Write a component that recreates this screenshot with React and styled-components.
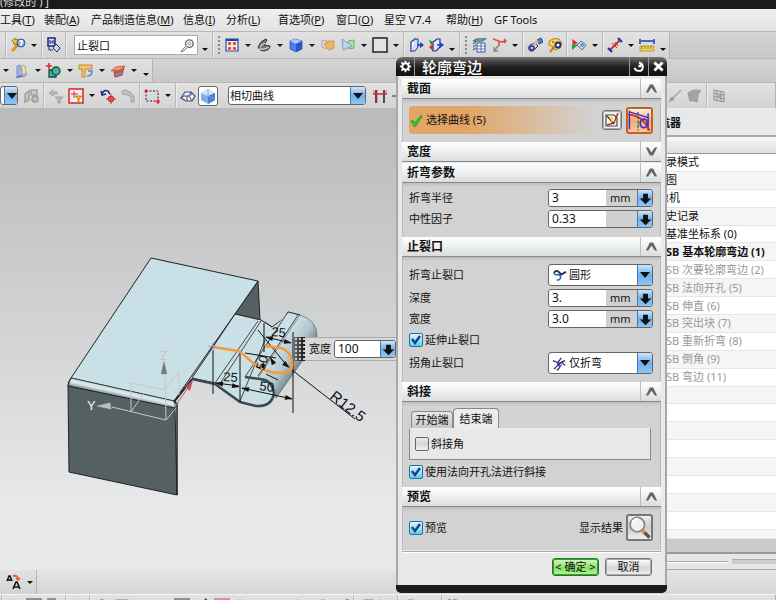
import React from "react";
import styled, { createGlobalStyle, css } from "styled-components";

const FONT = '"Noto Sans", "Noto Sans CJK SC", sans-serif';

const GlobalStyle = createGlobalStyle`
  * { box-sizing: border-box; }
  body { margin: 0; font: 11px/16px ${FONT}; color: #111; overflow: hidden; }
  button, input, select { font: inherit; color: inherit; margin: 0; }
`;

const Page = styled.div`
  position: relative;
  display: flex;
  flex-direction: column;
  height: 100vh;
  overflow: hidden;
  background: #dcdcdc;
`;
const TitleBar = styled.header`
  height: 9px;
  flex: none;
  display: flex;
  align-items: flex-end;
  overflow: hidden;
  background: #1b1b1b;
  color: #ddd;
  line-height: 14px;
`;
const MenuBar = styled.nav`
  height: 22px;
  flex: none;
  display: flex;
  align-items: center;
  background: linear-gradient(#f0f0f0, #e2e2e2);
  white-space: nowrap;
  overflow: hidden;
`;
const MenuItem = styled.button`
  flex: none;
  width: ${(p) => p.$w}px;
  padding: 0;
  border: 0;
  background: none;
  text-align: left;
  white-space: nowrap;
  line-height: 20px;
`;

const Strip = styled.div`
  flex: none;
  display: flex;
  background: linear-gradient(#d4d4d4, #c8c8c8);
  border-top: 1px solid #b8b8b8;
`;
const Bar = styled.div`
  display: flex;
  align-items: center;
  height: ${(p) => p.$h}px;
  flex: ${(p) => (p.$fill ? "1" : "none")};
  overflow: hidden;
  background: linear-gradient(#e2e2e2, #d3d3d3);
  border-right: 1px solid #b4b4b4;
  padding-left: ${(p) => p.$pad || 0}px;
`;
const Tool = styled.button`
  flex: none;
  display: flex;
  align-items: center;
  justify-content: center;
  width: 20px;
  height: 20px;
  padding: 0;
  border: ${(p) => (p.$on ? "1px solid #666" : "0")};
  border-radius: 3px;
  background: ${(p) => (p.$on ? "#fff" : "none")};
  opacity: ${(p) => (p.$dim ? 0.55 : 1)};
`;
const Caret = styled.button`
  flex: none;
  width: 12px;
  height: 18px;
  padding: ${(p) => (p.$low ? "8px 0 0" : "0")};
  border: 0;
  background: none;
  display: flex;
  align-items: center;
  justify-content: center;
  &::after {
    content: "";
    border: 3px solid transparent;
    border-top-color: #111;
    border-bottom: 0;
  }
`;
const Sep = styled.span`
  flex: none;
  width: 4px;
  align-self: stretch;
  background: linear-gradient(90deg, transparent 1px, #b8b8b8 1px 2px, #eee 2px 3px, transparent 3px);
`;
const Grip = styled.span`
  flex: none;
  width: 7px;
  height: 18px;
  background: repeating-linear-gradient(#888 0 2px, transparent 2px 4px) center / 2px 100% no-repeat;
`;
const Grow = styled.span`
  flex: 1;
`;
const NavGap = styled.span`
  flex: none;
  width: 46px;
`;
const SearchBox = styled.label`
  flex: none;
  display: flex;
  align-items: center;
  width: 124px;
  height: 20px;
  margin: 0 1px 0 6px;
  background: #fff;
  border: 1px solid #aaa;
  padding-right: 2px;
`;
const SearchInput = styled.input`
  flex: 1;
  min-width: 0;
  height: 18px;
  padding: 0 2px;
  border: 0;
  outline: 0;
  background: none;
`;

const blue = "linear-gradient(#cfe6fb, #6fb0ee 50%, #8cc6f6)";
const SelectWrap = styled.label`
  display: grid;
  flex: none;
  align-items: stretch;
  width: ${(p) => p.$w}px;
  height: ${(p) => p.$h}px;
  margin: 0 ${(p) => p.$mr || 0}px 0 ${(p) => p.$ml || 0}px;
  border: 1px solid #666;
  border-radius: 3px;
  background: #fff;
  overflow: hidden;
  > * { grid-area: 1 / 1; }
  > svg { align-self: center; margin-left: 3px; pointer-events: none; }
`;
const SelectCtl = styled.select`
  appearance: none;
  border: 0;
  outline: 0;
  width: 100%;
  background: none;
  padding: 0 18px 0 ${(p) => p.$pl}px;
`;
const DropMark = styled.span`
  justify-self: end;
  width: 15px;
  pointer-events: none;
  display: flex;
  align-items: center;
  justify-content: center;
  background: ${blue};
  border-left: 1px solid #4a78a8;
  &::after {
    content: "";
    border: 5px solid transparent;
    border-top: 6px solid #111;
    border-bottom: 0;
  }
`;

/* Work area */
const Work = styled.main`
  flex: 1;
  min-height: 0;
  display: flex;
`;
const Viewport = styled.section`
  position: relative;
  flex: 1;
  min-width: 0;
  display: flex;
  flex-direction: column;
  overflow: hidden;
  background: linear-gradient(#b9babc, #d3d4d6 50%, #e6e8ea 85%);
`;
const Scene = styled.svg`
  display: block;
  flex: none;
`;
const WidthPopup = styled.form`
  position: absolute;
  left: 293px;
  top: 229px;
  width: 104px;
  height: 24px;
  display: flex;
  align-items: center;
  background: #d8d8d8;
  border: 1px solid #aaa;
  border-left: 0;
`;
const PopupGrip = styled.span`
  width: 12px;
  height: 24px;
  margin-right: 4px;
  background:
    radial-gradient(circle, #ccc 1px, transparent 1px) 1px 4px / 4px 4px,
    linear-gradient(90deg, #777, #111);
`;
const PopupLabel = styled.label`
  flex: none;
  width: 25px;
`;

const Navigator = styled.aside`
  width: 136px;
  flex: none;
  display: flex;
  flex-direction: column;
  background: #e6e6e6;
`;
const NavTitle = styled.h2`
  margin: 0;
  height: 29px;
  flex: none;
  padding-left: 19px;
  font-size: 11px;
  line-height: 29px;
  background: #e8e8e8;
  border-bottom: 2px solid #aaa;
`;
const NavHead = styled.div`
  height: 17px;
  flex: none;
  background: linear-gradient(#f6f7f7, #dde0e0);
  border-bottom: 1px solid #999;
`;
const NavList = styled.ul`
  flex: 1;
  min-height: 0;
  display: flex;
  flex-direction: column;
  margin: 0;
  padding: 0;
  list-style: none;
`;
const NavRow = styled.li`
  flex: ${(p) => (p.$half ? 1 : 2)};
  min-height: 0;
  display: flex;
  align-items: center;
  padding-left: ${(p) => p.$pl}px;
  white-space: nowrap;
  background: ${(p) => (p.$alt ? "#f5f5f6" : "#fff")};
  border-bottom: 1px solid #e6e6e6;
  color: ${(p) => (p.$tone === "dim" ? "#999" : "#111")};
  font-weight: ${(p) => (p.$tone === "bold" ? 700 : 400)};
`;
const NavScroll = styled.div`
  height: 15px;
  flex: none;
  background: #cbcbcb;
  border-bottom: 2px solid #999;
`;
const NavFoot = styled.div`
  height: 16px;
  flex: none;
  display: flex;
  align-items: center;
  border-bottom: 1px solid #aaa;
`;
const FootLine = styled.span`
  flex: ${(p) => (p.$thick ? "1" : "none")};
  width: ${(p) => (p.$thick ? "auto" : "88px")};
  margin-right: ${(p) => (p.$thick ? 0 : 4)}px;
  height: ${(p) => (p.$thick ? 5 : 2)}px;
  background: ${(p) => (p.$thick ? "#cdcdcd" : "#fff")};
  border-top: 1px solid #aaa;
`;

const StatusBar = styled.div`
  height: 24px;
  flex: none;
  display: flex;
  background: linear-gradient(#e4e4e4, #d6d6d6);
`;
const ClippedBar = styled.div`
  height: 6px;
  flex: none;
  overflow: hidden;
  border-top: 1px solid #f4f4f4;
  background: #d4d4d4;
`;

/* Dialog */
const Dialog = styled.section`
  position: absolute;
  left: 396px;
  top: 57px;
  width: 271px;
  border-radius: 6px 6px 5px 5px;
  background: #e9e9e9;
  overflow: hidden;
  border-bottom: 8px solid #1c1c1c;
`;
const DialogBar = styled.header`
  height: 19px;
  display: flex;
  align-items: center;
  background: linear-gradient(#777, #444 25%, #1d1d1d 55%, #111);
`;
const DialogTitle = styled.h1`
  flex: 1;
  margin: 0;
  padding-left: 7px;
  font-size: 15px;
  font-weight: 500;
  line-height: 16px;
  color: #fff;
`;
const BarButton = styled.button`
  width: 19px;
  height: 19px;
  padding: 0;
  border: 0;
  background: none;
  display: flex;
  align-items: center;
  justify-content: center;
  border-left: ${(p) => (p.$edge === "l" ? "1px solid #999" : "0")};
  border-right: ${(p) => (p.$edge === "r" ? "1px solid #999" : "0")};
`;
const DialogBody = styled.div`
  padding: 3px 4px 0 4px;
  border: solid #a8a8a8;
  border-width: 0 2px;
`;
const SectionHead = styled.h2`
  margin: 0;
  height: 20px;
  display: flex;
  align-items: stretch;
  font-size: 12px;
  font-weight: 700;
  line-height: 20px;
  padding-left: 5px;
  background: linear-gradient(#fff, #eef0f0 50%, #dadddd);
  border-bottom: 1px solid #888;
  margin-bottom: ${(p) => (p.$closed ? 1 : 0)}px;
`;
const SectionName = styled.span`
  flex: 1;
`;
const Fold = styled.button`
  width: 21px;
  padding: 0;
  border: 0;
  border-left: 1px solid #bbb;
  background: none;
  display: flex;
  align-items: center;
  justify-content: center;
`;
const SectionBody = styled.div`
  display: flex;
  flex-direction: column;
  gap: 3px;
  padding: ${(p) => p.$pt}px 7px ${(p) => p.$pb}px 6px;
  background: linear-gradient(#bdbdbd, #d2d2d2 4px);
  border: solid #bbb;
  border-width: 0 1px;
`;
const Row = styled.div`
  display: flex;
  align-items: center;
  justify-content: space-between;
  min-height: 18px;
  gap: ${(p) => p.$gap || 0}px;
`;
const PickBar = styled.div`
  flex: 1;
  height: 28px;
  display: flex;
  align-items: center;
  gap: 3px;
  padding-left: 1px;
  border-radius: 4px 0 0 4px;
  background: linear-gradient(90deg, #e2a565 30%, #d2d2d2 98%);
`;
const PickButton = styled.button`
  width: ${(p) => (p.$on ? 27 : 20)}px;
  height: ${(p) => (p.$on ? 27 : 20)}px;
  padding: 0;
  display: flex;
  align-items: center;
  justify-content: center;
  border-radius: 3px;
  ${(p) =>
    p.$on
      ? css`
          border: 2px solid #c8601c;
          background: linear-gradient(#fff4ea, #f6a878 50%, #f9c7a2);
        `
      : css`
          border: 1px solid #777;
          box-shadow: inset 0 0 0 1px #aaa;
          background: #f0f0f0;
        `}
`;
const Field = styled.span`
  display: flex;
  flex: ${(p) => (p.$fill ? "1" : "none")};
  min-width: 0;
  width: 105px;
  height: 18px;
  border: 1px solid #666;
  border-radius: 3px;
  background: #d0d0d0;
  overflow: hidden;
`;
const FieldInput = styled.input`
  width: 57px;
  flex: ${(p) => (p.$fill ? "1" : "none")};
  min-width: 0;
  padding: 0 3px;
  border: 0;
  outline: 0;
  background: #fff;
  font-size: 12px;
  line-height: 16px;
`;
const Unit = styled.span`
  flex: 1;
  padding-left: 4px;
`;
const Step = styled.button`
  flex: none;
  width: 15px;
  padding: 0;
  border: 0;
  border-left: 1px solid #4a78a8;
  background: ${blue};
  display: flex;
  align-items: center;
  justify-content: center;
`;
const CheckLabel = styled.label`
  display: flex;
  align-items: center;
  gap: 2px;
`;
const CheckBox = styled.input`
  appearance: none;
  width: 14px;
  height: 14px;
  margin: 0;
  border: 1px solid #666;
  border-radius: 2px;
  background: linear-gradient(#eee, #d4d4d4 50%, #f4f4f4);
  &:checked {
    border-color: #1d6ea5;
    background:
      url("data:image/svg+xml,%3Csvg xmlns='http://www.w3.org/2000/svg' viewBox='0 0 12 12'%3E%3Cpath d='M2 5l3 4 5-7' fill='none' stroke='%23133f8c' stroke-width='2.4'/%3E%3C/svg%3E"),
      linear-gradient(#e8f6fc, #58d0ee);
  }
`;
const Tabs = styled.div`
  display: flex;
  align-items: flex-end;
  height: 20px;
  padding-left: 2px;
`;
const Tab = styled.button`
  height: ${(p) => (p.$on ? 21 : 17)}px;
  width: ${(p) => (p.$on ? 46 : 42)}px;
  padding: 0;
  white-space: nowrap;
  border: 1px solid #888;
  border-bottom: 0;
  border-radius: 4px 4px 0 0;
  background: ${(p) => (p.$on ? "#ececec" : "linear-gradient(#e8e8e8, #c8c8c8)")};
  align-self: ${(p) => (p.$on ? "flex-start" : "flex-end")};
`;
const TabPanel = styled.div`
  display: flex;
  height: 32px;
  margin-right: 2px;
  padding-left: 5px;
  background: #e8e8e8;
  border: 1px solid #888;
  border-top-color: #eee;
`;
const TabGroup = styled.div`
  display: flex;
  flex-direction: column;
`;
const ResultLabel = styled.label`
  display: flex;
  align-items: center;
  gap: 3px;
`;
const ResultButton = styled.button`
  width: 27px;
  height: 27px;
  padding: 0;
  border: 2px solid #777;
  border-radius: 3px;
  background: linear-gradient(#eee, #ccc 50%, #eee);
`;
const Footer = styled.footer`
  display: flex;
  justify-content: flex-end;
  gap: 6px;
  height: 33px;
  margin-top: 2px;
  padding: 5px 9px 0 0;
  border-top: 1px solid #fff;
  box-shadow: 0 -1px #aaa;
`;
const ActionButton = styled.button`
  width: 47px;
  height: 18px;
  padding: 0;
  line-height: 14px;
  white-space: nowrap;
  border-radius: 3px;
  border: 1px solid ${(p) => (p.$ok ? "#1f7a22" : "#777")};
  box-shadow: inset 0 0 0 1px ${(p) => (p.$ok ? "#3f9a3a" : "#aaa")};
  background: ${(p) => (p.$ok ? "linear-gradient(#d8f8c8, #86e264 55%, #b4f696)" : "linear-gradient(#fff, #d6d6d6 55%, #f2f2f2)")};
`;

/* Icons, drawn on a 16px grid */
const art = {
  wrenchHelp: <><path d="M2 14l6-6" stroke="#d99a1c" strokeWidth="3" /><path d="M2 4q3-4 6-1l1 4-4 1-2-3" fill="#f0c040" stroke="#8a6510" /><circle cx="11" cy="6" r="4" fill="#88a9dc" stroke="#35578f" /><path d="M9.500 5q2-3 3 0l-1.500 2v2" fill="none" stroke="#fff" strokeWidth="1.500" /></>,
  finder: <><path d="M2 1h7v8H2z" fill="#dfe2ff" stroke="#22227d" strokeWidth="1.500" /><path d="M4 3v4M7 3v4M4 5h3" stroke="#22227d" /><path d="M10 7l4 4-3 4-4-4z" fill="#cfd9f8" stroke="#22227d" /><path d="M3 10v3h4" fill="none" stroke="#22227d" /></>,
  search: <><circle cx="10" cy="6" r="4" fill="none" stroke="#666" strokeWidth="1.500" /><circle cx="10" cy="6" r="1.500" fill="none" stroke="#888" /><path d="M7 8l-6 6 1 1 6-5" fill="#fff" stroke="#666" /></>,
  fit: <><path d="M2 2h12v12H2z" fill="#fff" stroke="#1c49a8" strokeWidth="1.200" /><path d="M2 3h12" stroke="#1c49a8" strokeWidth="2" /><path d="M4 5h3v3H4zM9 5h3v3H9zM4 10h3v3H4zM9 10h3v3H9z" fill="#e63a22" stroke="#f29a80" strokeWidth=".5" /></>,
  orient: <><path d="M2 10q3-7 8-8l1 1-3 5 6 1q0 4-6 5-5 0-6-4z" fill="#777" stroke="#333" /><path d="M4 10q2-3 5-4M3 12q5 1 10-2" stroke="#ccc" strokeWidth="1.300" /></>,
  cube: <><path d="M2 4l5-2 7 2v8l-6 3-6-3z" fill="#4b7df0" stroke="#29489f" strokeWidth=".7" /><path d="M2 4l5-2 7 2-6 3z" fill="#a9caff" /><path d="M8 7l6-3v8l-6 3z" fill="#2b55cb" /></>,
  layerOrange: <><path d="M2 3l5 1v8l-5-2z" fill="#ddd" stroke="#aaa" /><path d="M4 7l4-3h6v7l-5 2z" fill="#f0b260" stroke="#d09a60" /></>,
  layerGreen: <><path d="M8 4l6-1v8l-5 1z" fill="#a9e2a0" stroke="#7aa878" /><path d="M2 2l10 7-9 4z" fill="#b4d6f0" stroke="#7ea2c0" /></>,
  square: <path d="M1 1h14v14H1z" fill="#e4e4e4" stroke="#222" strokeWidth="1.500" />,
  planeArrow: <><path d="M3 5l4-3v9l-4 3z" fill="#fff" stroke="#22337d" strokeWidth="1.200" /><path d="M7 2h3v8l-3 4H3" fill="#cfe0ff" stroke="#22337d" /><path d="M9 8h4" stroke="#1741d0" strokeWidth="1.500" /><path d="M12 5l4 3-4 3z" fill="#1741d0" /></>,
  planeSwap: <><path d="M5 5l4-3h3v8l-4 4H5z" fill="#dce6ff" stroke="#22337d" strokeWidth="1.200" /><path d="M1 3l5 2-3 3z" fill="#19a035" /><path d="M1 10l4-3v7z" fill="#d7262c" /><path d="M9 8h4" stroke="#1741d0" strokeWidth="1.500" /><path d="M12 5l4 3-4 3z" fill="#1741d0" /></>,
  layers: <><path d="M2 4l4-2h8l-3 2zM2 7l3-2M2 10l3-2M2 13l3-2" fill="#fff" stroke="#457a73" strokeWidth="1.300" /><path d="M6 6h8v9H6z" fill="#fff" stroke="#3453b5" /><path d="M10 6v9M6 9h8M6 12h8" stroke="#3453b5" strokeWidth=".8" /></>,
  axes: <><path d="M2 2l6 2v5M8 5l7-1M13 2l2 2-2 2" fill="none" stroke="#e14a3a" strokeWidth="1.500" /><path d="M8 8l-5 6M3 10v4h4" fill="none" stroke="#888" strokeWidth="1.500" /></>,
  erase: <><path d="M3 8l5-2 3 3-5 5H3l-2-3z" fill="#cbd2f0" stroke="#25347f" /><circle cx="5" cy="11" r="2" fill="none" stroke="#25347f" strokeWidth="1.500" /><path d="M10 3l4-2 2 4-4 2z" fill="#4a7ce0" stroke="#24478d" /><path d="M7 7l4-3" stroke="#f1b36a" strokeWidth="3" /></>,
  palette: <><path d="M2 4q5-4 10-2l3 4-2 5-5 2-2-3-4-2z" fill="#f3d258" stroke="#b2861c" /><circle cx="11" cy="8" r="2.500" fill="#e8ecff" stroke="#1c2f80" strokeWidth="1.800" /><path d="M3 15l5-6" stroke="#c47a1a" strokeWidth="2" /><circle cx="6" cy="5" r="1" fill="#e43" /></>,
  play: <><path d="M1 2l6 4-5 2z" fill="#e22" /><path d="M1 7l6 1-6 5z" fill="#17a23a" /><path d="M6 8l4-4 5 4-4 5z" fill="#c9dcf5" stroke="#53729c" /><circle cx="11" cy="8" r="2" fill="#6d96cf" /></>,
  measure: <><path d="M3 13L13 3" stroke="#d42a2a" strokeWidth="2" /><path d="M1 11l4 4M11 1l4 4" stroke="#1c34a8" strokeWidth="2" /><path d="M5 6l5 5M8 5l3 4" stroke="#d42a2a" /></>,
  ruler: <><path d="M1 2v5M15 2v5M2 4h12" stroke="#1c34c8" strokeWidth="1.500" /><path d="M1 9h14v5H1z" fill="#f4cf58" stroke="#c09838" /><path d="M3 9v3M6 9v3M9 9v3M12 9v3" stroke="#907020" strokeWidth=".8" /></>,
  sketch: <><path d="M3 3l3-1 2 7 5 2-3 3-7-2z" fill="#9db3ea" stroke="#8289c4" /><path d="M8 2l3 1 1 8H8z" fill="#f0e47c" stroke="#aaa" /><path d="M2 14h4l2-2" stroke="#5272b8" strokeWidth="1.500" /></>,
  shape: <><path d="M3 7h7v7H3z" fill="#43b59a" stroke="#124d44" strokeWidth="1.300" /><circle cx="10" cy="8" r="4" fill="#43b59a" stroke="#124d44" strokeWidth="1.300" /><path d="M3 0v6M0 3h6" stroke="#e2262a" strokeWidth="1.500" /></>,
  bracket: <><path d="M1 2h13v4H7v8H4V6H1z" fill="#f5c574" stroke="#c98730" /><path d="M10 8h4q0 5-5 5" fill="none" stroke="#5b87cf" strokeWidth="1.500" /></>,
  flange: <><path d="M4 8l10-4-2 8-7 2z" fill="#6e8fd6" stroke="#b23a20" /><path d="M1 8l5-4 9-1-5 4z" fill="#f4a15e" stroke="#d45a30" /><path d="M4 10l8-2" stroke="#e2482c" strokeWidth="2" /></>,
  grayBox: <><path d="M1 6l4-3v9l-4 2zM7 2h6v5H7z" fill="#bbb" stroke="#777" strokeWidth="1.500" /><circle cx="11" cy="11" r="3" fill="#aaa" stroke="#666" strokeWidth="1.500" /></>,
  grayFunnel: <><path d="M1 5l4-3v2h4v2H5v2zM7 9h8l-3 3v3h-2v-3z" fill="#a2a29a" stroke="#777" /></>,
  redFilter: <><path d="M1 1h14v14H1z" fill="#f7efef" stroke="#d3262b" strokeWidth="1.500" /><path d="M6 3v7M3 6h7" stroke="#d3262b" /><path d="M7 8h7l-3 3v3h-1v-3z" fill="#f0b020" stroke="#a87412" strokeWidth=".7" /></>,
  rotatePoint: <><path d="M2 6q2-5 6-3l2 3M1 3l1 4 4-1" fill="none" stroke="#1c2d80" strokeWidth="1.500" /><circle cx="11" cy="11" r="2.500" fill="none" stroke="#d3262b" strokeWidth="1.300" /><path d="M11 6v10M6 11h10" stroke="#d3262b" /></>,
  grayPipe: <path d="M2 3l3-1 5 2 4 4v6h-3V9L8 7 2 6z" fill="#aaa" stroke="#777" />,
  marquee: <><path d="M2 3h12v10H2z" fill="none" stroke="#222" strokeDasharray="2 1.500" /><path d="M1 2h2v2H1zM13 12h2v3h-2z" fill="#e22" stroke="#e22" /></>,
  solid: <><path d="M1 10l4-6h6l4 4-3 5H6z" fill="#eef2fa" stroke="#444d63" strokeWidth="1.200" /><path d="M1 10l3-2h5l2-4M9 8l3 5M7 8v5" fill="none" stroke="#444d63" /><path d="M9 7l3-1" stroke="#5a82cf" strokeWidth="2" /></>,
  blueBox: <><path d="M1 5l7-4 7 4v7l-7 4-7-4z" fill="#6fb5f6" /><path d="M1 5l7-4 7 4-7 3z" fill="#cbe7ff" /><path d="M8 8l7-3v7l-7 4z" fill="#3f86e0" /><path d="M8 1v7l-6 3M8 8l6 3" stroke="#e77" strokeWidth=".8" fill="none" /></>,
  grid: <><path d="M4 2v13M12 2v13" stroke="#222" strokeWidth="1.500" /><path d="M1 6h14" stroke="#d3262b" strokeWidth="1.500" /><path d="M5 2v13M2 2v4M14 2v4" stroke="#d3262b" strokeWidth=".7" /></>,
  dash: <path d="M0 8h8" stroke="#8a3ab0" strokeWidth="1.500" />,
  line: <><path d="M2 14L14 2" stroke="#777" strokeWidth="1.500" /><circle cx="5" cy="11" r="2" fill="#c44" /></>,
  surface: <><path d="M1 5q6-5 13-2-4 3-3 6l-1 5q-3-2-7-1Q2 9 1 5z" fill="#778" stroke="#667" /><circle cx="10" cy="6" r="1.500" fill="#c55" /></>,
  mesh: <><path d="M3 2l10 2v10L3 12zM3 5l10 2M3 8l10 3M6 3v10M10 4v10" fill="none" stroke="#555" /><circle cx="9" cy="8" r="1.500" fill="#c44" /></>,
  textSwap: <><path d="M1 7l2-5h1l2 5M2 6h4M7 15l3-7h1l3 7M8 13h5" fill="none" stroke="#111" strokeWidth="1.500" /><path d="M7 2q5-1 5 3" fill="none" stroke="#e35a26" strokeWidth="2" /><path d="M9 4h6l-3 3z" fill="#e35a26" /></>,
  arrowDown: <path d="M5 2h6v6h4l-7 7-7-7h4z" fill="#111" />,
  up: <path d="M1 13l5-10h4l5 10h-3L8 7l-4 6z" fill="#666" />,
  down: <path d="M1 3l5 10h4l5-10h-3L8 9 4 3z" fill="#666" />,
  check: <path d="M1 9l3-1 2 3 7-9 2 1-8 12H5z" fill="#23d02c" stroke="#168a1e" strokeWidth=".8" />,
  gear: <><circle cx="8" cy="8" r="4" fill="none" stroke="#fff" strokeWidth="2.500" /><path d="M8 1v3M8 12v3M1 8h3M12 8h3M3 3l2 2M11 11l2 2M13 3l-2 2M5 11l-2 2" stroke="#fff" strokeWidth="2" /></>,
  reset: <path d="M8 2q6 2 5 7t-6 4q-4 0-5-4M7 7h3V3" fill="none" stroke="#fff" strokeWidth="2.500" />,
  close: <path d="M3 3l10 10M13 3L3 13" stroke="#fff" strokeWidth="3.500" />,
  sketchPick: <><path d="M2 3h8l3 3v8H2z" fill="#fff" stroke="#444" strokeWidth="1.200" /><path d="M3 13l7-2 4-10" fill="none" stroke="#cf2222" strokeWidth="1.500" /><path d="M3 4l7 8" stroke="#333" strokeWidth="1.300" /><path d="M5 5l3-1 2 4-2 2z" fill="#f7e431" /></>,
  curvePick: <><path d="M1 14V1M14 15V3" stroke="#2633d8" strokeWidth="1" /><path d="M0 4q10 0 15 11" fill="none" stroke="#e12f1c" strokeWidth="1.400" /><path d="M7 2v13" stroke="#257a4a" strokeDasharray="2 1" /><ellipse cx="11" cy="10" rx="2.500" ry="3" fill="none" stroke="#2633d8" strokeWidth="1.200" /><path d="M1 2l13 4" stroke="#2633d8" strokeWidth="1" /></>,
  round: <><path d="M2 5q3-4 6 0l2 2 5-3" fill="none" stroke="#1a2a58" strokeWidth="2" /><path d="M2 5q1 3 4 2 4 0 3 4-1 2-4 2" fill="none" stroke="#3a62a8" strokeWidth="1.700" /></>,
  bendOnly: <><path d="M1 5l5 2 4-5M6 7l2 3M2 14l5-5 4-3 3-1M10 6l4 4M9 10q-1 4-4 5" fill="none" stroke="#2a2a68" strokeWidth="1.300" /><circle cx="8" cy="9" r="2" fill="none" stroke="#2633d8" /></>,
  lens: <><circle cx="6.500" cy="6" r="5" fill="#eef3f8" stroke="#888" strokeWidth="1.200" /><path d="M3 5q1-3 4-3" fill="none" stroke="#fff" strokeWidth="1.500" /><path d="M10 10l5 5" stroke="#555" strokeWidth="2.400" /><path d="M10 10l1.500 1.500" stroke="#e6a020" strokeWidth="2.400" /></>,
};
const Icon = ({ name, size = 16 }) => (
  <svg width={size} height={size} viewBox="0 0 16 16" fill="none" aria-hidden="true">{art[name]}</svg>
);

/* A toolbar is a list of tokens: "|" divider, ":" grip, "v" caret, "_" low caret, or an icon name */
const Tools = ({ items }) =>
  items.split(" ").map((t, i) => {
    if (t === "|") return <Sep key={i} />;
    if (t === ":") return <Grip key={i} />;
    if (t === "v") return <Caret key={i} aria-label="更多" />;
    if (t === "_") return <Caret key={i} $low aria-label="工具条选项" />;
    const name = t.replace(/[-+]/, "");
    return (
      <Tool key={i} $dim={t.endsWith("-")} $on={t.endsWith("+")} aria-label={name}>
        <Icon name={name} />
      </Tool>
    );
  });

const menus = [
  ["工具(", "T", 44], ["装配(", "A", 47], ["产品制造信息(", "M", 92], ["信息(", "I", 43], ["分析(", "L", 52],
  ["首选项(", "P", 58], ["窗口(", "O", 48], ["星空 V7.4", "", 62], ["帮助(", "H", 48], ["GF Tools", "", 60],
];

const tree = [
  ["录模式", ""], ["图", ""], ["像机", "", 18], ["史记录", ""], ["基准坐标系 (0)", ""], ["SB 基本轮廓弯边 (1)", "bold"],
  ["SB 次要轮廓弯边 (2)", "dim"], ["SB 法向开孔 (5)", "dim"], ["SB 伸直 (6)", "dim"], ["SB 突出块 (7)", "dim"],
  ["SB 重新折弯 (8)", "dim"], ["SB 倒角 (9)", "dim"], ["SB 弯边 (11)", "dim"],
  ...Array(9).fill(["", ""]),
];

const Section = ({ title, closed, pt, pb, children }) => (
  <section>
    <SectionHead $closed={closed}>
      <SectionName>{title}</SectionName>
      <Fold aria-label={title}><Icon name={closed ? "down" : "up"} size={13} /></Fold>
    </SectionHead>
    {!closed && <SectionBody $pt={pt} $pb={pb}>{children}</SectionBody>}
  </section>
);
const Value = ({ id, label, value, unit }) => (
  <Row>
    <label htmlFor={id}>{label}</label>
    <Field>
      <FieldInput id={id} defaultValue={value} />
      <Unit>{unit}</Unit>
      <Step aria-label={label}><Icon name="arrowDown" size={13} /></Step>
    </Field>
  </Row>
);
const Choice = ({ id, label, value, icon }) => (
  <Row>
    <label htmlFor={id}>{label}</label>
    <SelectWrap $w={105} $h={22}>
      <SelectCtl id={id} $pl={20}><option>{value}</option></SelectCtl>
      <Icon name={icon} size={15} />
      <DropMark />
    </SelectWrap>
  </Row>
);
const Check = ({ label, on }) => (
  <CheckLabel><CheckBox type="checkbox" defaultChecked={on} />{label}</CheckLabel>
);

const Arrow = ({ x, y, a }) => <path d="M0 0l-8-2.500v5z" fill="#111" transform={`translate(${x} ${y}) rotate(${a})`} />;

const Model = () => (
  <Scene width="396" height="404" viewBox="0 108 396 404" fontFamily='"Liberation Sans", sans-serif'>
    <defs>
      <linearGradient id="bend" gradientUnits="userSpaceOnUse" x1="120" y1="389" x2="118" y2="398">
        <stop offset="0" stopColor="#c9e0e6" /><stop offset=".4" stopColor="#dcebef" /><stop offset="1" stopColor="#5c6a6e" />
      </linearGradient>
      <linearGradient id="roll" gradientUnits="userSpaceOnUse" x1="280" y1="345" x2="306" y2="362">
        <stop offset="0" stopColor="#c9e0e6" /><stop offset=".5" stopColor="#b0c6cc" /><stop offset="1" stopColor="#65757a" />
      </linearGradient>
    </defs>
    <g stroke="#222" strokeWidth="1" strokeLinejoin="round" fill="#c9e0e6">
      <path d="M235 314L258 281 260 320z" fill="#556063" />
      <path d="M235 314L261 320 272 327 284 318 288 312 300 315 240 401 215 383 192 378z" />
      <path d="M288 312L300 315Q317 320 317 336L310 350 276 398Q272 407 257 406L240 401 215 383 255 350z" stroke="none" />
      <path d="M300 315Q317 320 317 336L310 350 276 398Q272 378 258 378z" fill="url(#roll)" stroke="#555" strokeWidth=".6" />
      <path d="M288 312L245 377M288 312l12 3M298 315L258 376M258 321L215 383M261 321L219 385M272 327l-7-5M265 340L240 401" fill="none" strokeWidth=".8" />
      <path d="M192 379L215 384 240 402 256 406Q272 407 274 393 272 380 260 379L245 377" fill="none" stroke="#3d494c" strokeWidth="2.500" />
      <path d="M151 258L258 281 174 401 71 378z" />
      <path d="M71 378L174 401 176 409 68 386z" fill="url(#bend)" strokeWidth=".7" />
      <path d="M68 386L175 408 177 495 69 472z" fill="#556063" />
      <path d="M174 401L177 404 177 495" fill="none" strokeWidth="1.500" />
      <path d="M174 402L192 379" fill="none" strokeWidth="2" />
      <path d="M71 378Q68 381 68 386" fill="none" />
    </g>
    <g stroke="#c8c8c8" fill="none" strokeWidth="1">
      <path d="M112 407L166 420 165 374M131 412V383L165 390 179 371V395M166 420L176 408M131 412L144 393" />
      <path d="M97 406l13-3 1 6z" fill="#bbb" stroke="#ccc" strokeWidth=".5" />
      <path d="M164 361l-3 13h6z" fill="#777" stroke="#999" strokeWidth=".5" />
      <path d="M176 405L187 389" stroke="#c4555b" /><path d="M193 380l-3 11-5-4z" fill="#b4565c" stroke="none" />
    </g>
    <text x="87" y="410" fontSize="13" fill="#f4f4f4">Y</text>
    <text x="160" y="360" fontSize="12" fill="#c4c4c4">Z</text>
    <g stroke="#111" strokeWidth="1" fill="none">
      <path d="M213 350V394M240 352V402M293 332V413M264 323V352M216 383L239 386M242 388L292 399M266 337L291 343M258 330L288 367M292 370L355 419M245 353L276 358M266 374L278 380" />
    </g>
    <Arrow x={215} y={383} a={187} /><Arrow x={240} y={387} a={10} /><Arrow x={241} y={388} a={192} /><Arrow x={293} y={399} a={12} />
    <Arrow x={265} y={337} a={192} /><Arrow x={292} y={343} a={12} /><Arrow x={290} y={368} a={38} /><Arrow x={270} y={357} a={240} /><Arrow x={264} y={362} a={285} />
    <path d="M213 347L238 351C246 355 252 364 262 369 276 375 292 374 292 366 293 358 288 350 281 348L265 346" fill="none" stroke="#f7993a" strokeWidth="2.500" />
    <path d="M208 346h8M213 342v9" stroke="#8b9be8" strokeWidth=".8" />
    <g fontSize="13" fill="#111">
      <text x="271" y="336" transform="rotate(5 271 336)">25</text>
      <text x="223" y="381" transform="rotate(4 223 381)">25</text>
      <text x="259" y="390" transform="rotate(8 259 390)">50</text>
      <text x="264" y="371" transform="rotate(-72 264 371)">50</text>
      <text x="329" y="398" fontSize="15" transform="rotate(38 329 398)">R12.5</text>
    </g>
  </Scene>
);

export default function App() {
  return (
    <Page>
      <GlobalStyle />
      <TitleBar>(修改的 ) ]</TitleBar>
      <MenuBar>
        {menus.map(([t, k, w]) => (
          <MenuItem key={t} $w={w}>{t}{k && <><u>{k}</u>)</>}</MenuItem>
        ))}
      </MenuBar>
      <Strip>
        <Bar $h={26} $pad={4}>
          <Tools items="| wrenchHelp v | finder |" />
          <SearchBox>
            <SearchInput aria-label="查找命令" defaultValue="止裂口" />
            <Icon name="search" size={15} />
          </SearchBox>
          <Tools items="_ | : fit v orient v cube v layerOrange layerGreen v square v | planeArrow planeSwap _ | : layers axes v | erase palette | play v | measure v ruler _" />
        </Bar>
      </Strip>
      <Strip>
        <Bar $h={23}>
          <Tools items="v sketch v shape v bracket v flange v _" />
        </Bar>
      </Strip>
      <Strip>
        <Bar $h={25} $fill>
          <SelectWrap $w={18} $h={19} $mr={4}>
            <SelectCtl $pl={0} aria-label="类型过滤器"><option></option></SelectCtl>
            <DropMark />
          </SelectWrap>
          <Tools items="grayBox- | grayFunnel- redFilter v rotatePoint grayPipe- | marquee v | solid blueBox+" />
          <SelectWrap $w={138} $h={19} $ml={10} $mr={4}>
            <SelectCtl $pl={1} aria-label="曲线规则"><option>相切曲线</option></SelectCtl>
            <DropMark />
          </SelectWrap>
          <Tools items="grid dash" />
          <Grow />
          <Tools items="line- surface- | mesh-" />
          <NavGap />
        </Bar>
      </Strip>
      <Work>
        <Viewport>
          <Model />
          <WidthPopup>
            <PopupGrip />
            <PopupLabel htmlFor="popup-width">宽度</PopupLabel>
            <Field $fill>
              <FieldInput $fill id="popup-width" defaultValue="100" />
              <Step type="button" aria-label="宽度"><Icon name="arrowDown" size={13} /></Step>
            </Field>
          </WidthPopup>
        </Viewport>
        <Navigator>
          <NavTitle>航器</NavTitle>
          <NavHead />
          <NavList>
            {tree.map(([t, tone, pl], i) => (
              <NavRow key={i} $tone={tone} $alt={i % 2 === 1} $half={i === tree.length - 1} $pl={pl || 26}>{t}</NavRow>
            ))}
          </NavList>
          <NavScroll />
          <NavFoot><FootLine /><FootLine $thick /></NavFoot>
        </Navigator>
      </Work>
      <StatusBar>
        <Bar $h={24} $pad={4}><Tools items="textSwap v" /></Bar>
      </StatusBar>
      <ClippedBar>
        <Bar $h={22}><Tools items="| cube- square- finder- | orient- | planeArrow- fit- layerOrange- grid- square- measure redFilter- rotatePoint flange- flange- mesh- surface- erase- | layers- axes- | palette- play- | textSwap-" /></Bar>
      </ClippedBar>

      <Dialog aria-label="轮廓弯边">
        <DialogBar>
          <BarButton $edge="r" aria-label="设置"><Icon name="gear" size={13} /></BarButton>
          <DialogTitle>轮廓弯边</DialogTitle>
          <BarButton $edge="l" aria-label="重置"><Icon name="reset" size={12} /></BarButton>
          <BarButton $edge="l" aria-label="关闭"><Icon name="close" size={13} /></BarButton>
        </DialogBar>
        <DialogBody>
          <Section title="截面" pt={7} pb={8}>
            <Row $gap={4}>
              <PickBar><Icon name="check" size={13} />选择曲线 (5)</PickBar>
              <PickButton aria-label="草图截面"><Icon name="sketchPick" /></PickButton>
              <PickButton $on aria-label="曲线"><Icon name="curvePick" size={23} /></PickButton>
            </Row>
          </Section>
          <Section title="宽度" closed />
          <Section title="折弯参数" pt={6} pb={9}>
            <Value id="radius" label="折弯半径" value="3" unit="mm" />
            <Value id="factor" label="中性因子" value="0.33" unit="" />
          </Section>
          <Section title="止裂口" pt={7} pb={8}>
            <Choice id="relief" label="折弯止裂口" value="圆形" icon="round" />
            <Value id="depth" label="深度" value="3." unit="mm" />
            <Value id="width" label="宽度" value="3.0" unit="mm" />
            <Row><Check label="延伸止裂口" on /></Row>
            <Choice id="corner" label="拐角止裂口" value="仅折弯" icon="bendOnly" />
          </Section>
          <Section title="斜接" pt={6} pb={6}>
            <TabGroup>
              <Tabs role="tablist">
                <Tab role="tab">开始端</Tab>
                <Tab role="tab" $on aria-selected="true">结束端</Tab>
              </Tabs>
              <TabPanel role="tabpanel"><Check label="斜接角" /></TabPanel>
            </TabGroup>
            <Row><Check label="使用法向开孔法进行斜接" on /></Row>
          </Section>
          <Section title="预览" pt={7} pb={9}>
            <Row>
              <Check label="预览" on />
              <ResultLabel>显示结果<ResultButton aria-label="显示结果"><Icon name="lens" size={23} /></ResultButton></ResultLabel>
            </Row>
          </Section>
          <Footer>
            <ActionButton $ok>&lt; 确定 &gt;</ActionButton>
            <ActionButton>取消</ActionButton>
          </Footer>
        </DialogBody>
      </Dialog>
    </Page>
  );
}
